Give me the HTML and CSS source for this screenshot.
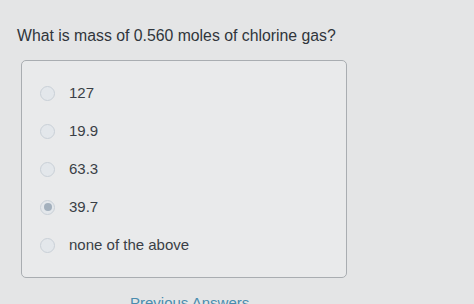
FILE: index.html
```html
<!DOCTYPE html>
<html>
<head>
<meta charset="utf-8">
<link rel="stylesheet" href="styles.css">
</head>
<body>
<div class="page">
  <div class="question">What is mass of 0.560 moles of chlorine gas?</div>
  <div class="choices">
    <div class="choice"><span class="radio"></span><span class="label">127</span></div>
    <div class="choice"><span class="radio"></span><span class="label">19.9</span></div>
    <div class="choice"><span class="radio"></span><span class="label">63.3</span></div>
    <div class="choice"><span class="radio checked"></span><span class="label">39.7</span></div>
    <div class="choice"><span class="radio"></span><span class="label">none of the above</span></div>
  </div>
  <div class="links"><span class="link">Previous Answers</span></div>
</div>
</body>
</html>
```
FILE: styles.css
```css
html, body {
  margin: 0;
  padding: 0;
}
body {
  background: #e4e5e6;
  font-family: "Liberation Sans", Arial, sans-serif;
  color: #353a40;
  width: 474px;
  height: 304px;
  overflow: hidden;
}
.page {
  padding: 26px 0 0 17px;
}
.question {
  font-size: 15.8px;
  line-height: 20px;
  color: #30353b;
}
.choices {
  margin: 14px 0 0 4px;
  width: 324px;
  border: 1px solid #a9adb1;
  border-radius: 5px;
  background: #e9eaeb;
  padding: 13px 0 13px 0;
  display: flex;
  flex-direction: column;
}
.choice {
  height: 38px;
  display: flex;
  align-items: center;
  padding-left: 18px;
}
.radio {
  width: 13px;
  height: 13px;
  border-radius: 50%;
  border: 1px solid #c9d0d7;
  background: #e3e7eb;
  box-sizing: content-box;
  flex: none;
  display: flex;
  align-items: center;
  justify-content: center;
}
.radio.checked::after {
  content: "";
  width: 8px;
  height: 8px;
  border-radius: 50%;
  background: #a3b0bd;
}
.label {
  margin-left: 14px;
  font-size: 15px;
  line-height: 18px;
  color: #3a3f46;
}
.links {
  margin-top: 16px;
  padding-left: 113px;
}
.link {
  font-size: 15px;
  line-height: 18px;
  color: #4a8cae;
}
```
